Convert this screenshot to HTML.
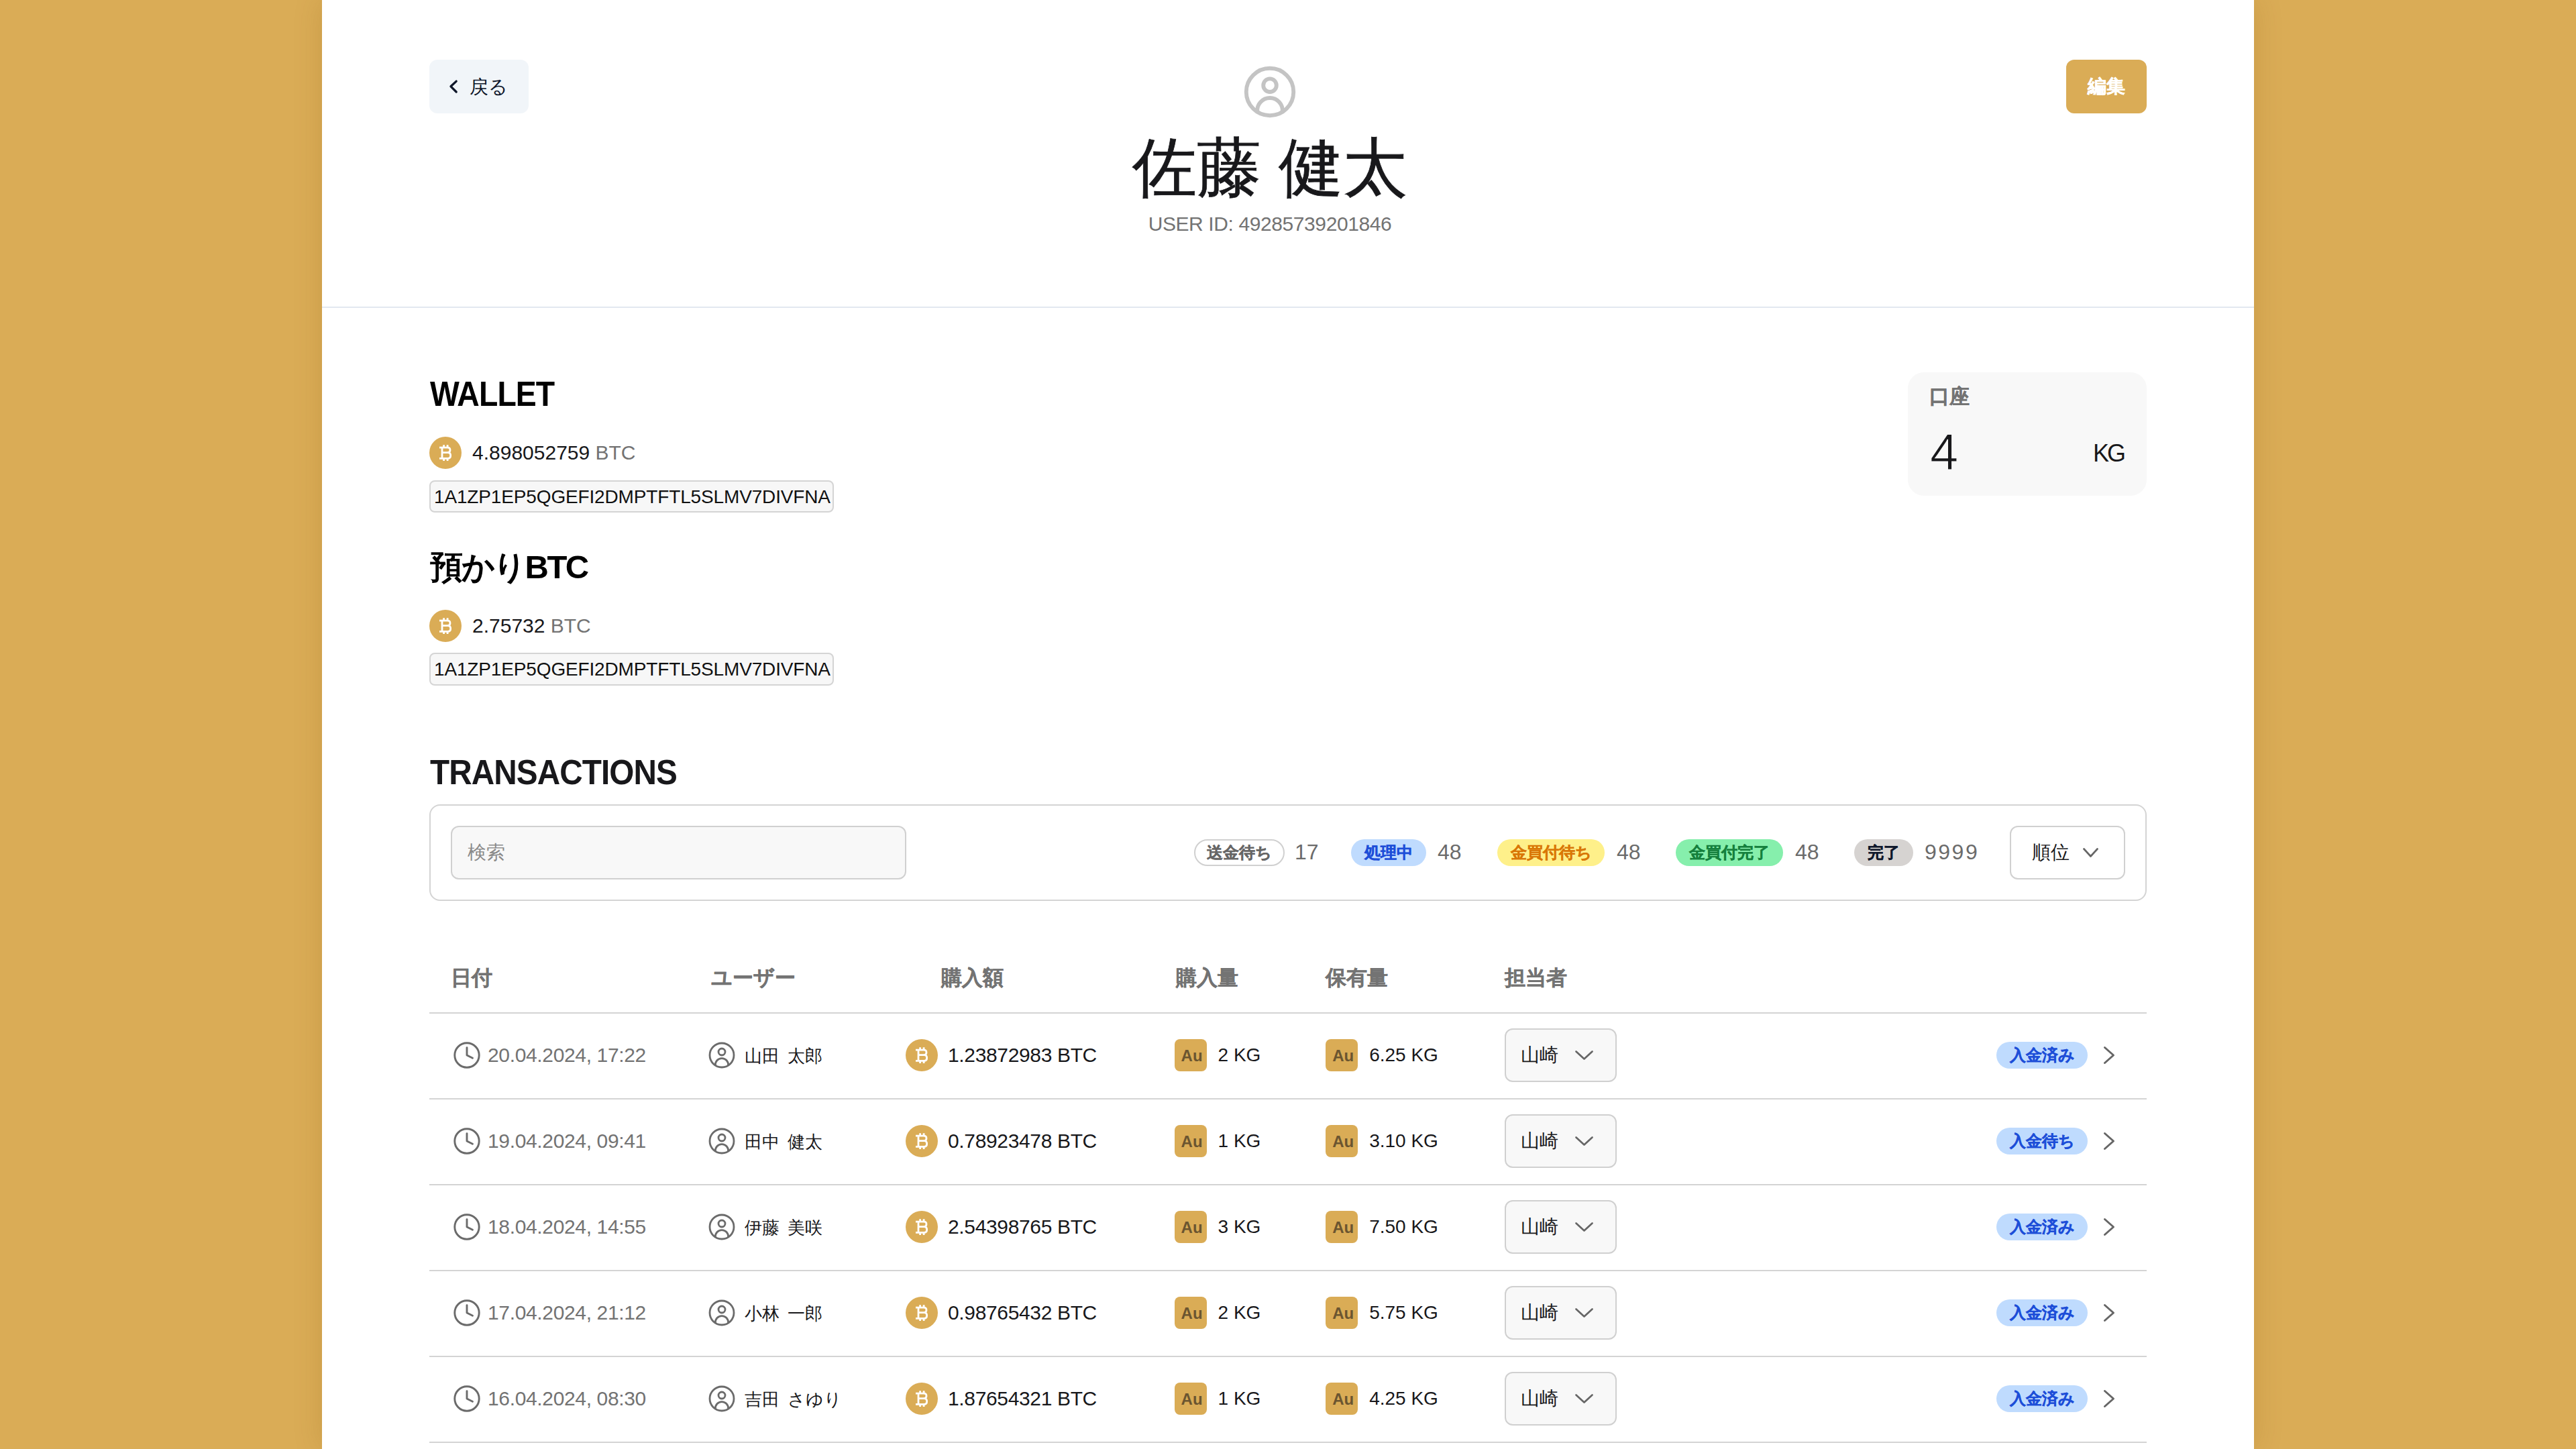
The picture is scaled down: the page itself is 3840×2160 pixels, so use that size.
<!DOCTYPE html>
<html lang="ja"><head><meta charset="utf-8"><title>User</title>
<style>
html,body{margin:0;padding:0}
body{width:3840px;height:2160px;overflow:hidden;background:#daac56;position:relative;font-family:"Liberation Sans",sans-serif}
.panel{position:absolute;left:480px;top:0;width:2880px;height:2160px;background:#fff;box-shadow:0 0 40px rgba(120,80,0,0.18)}
.abs{position:absolute}
.t{white-space:nowrap}
.b{-webkit-text-stroke:0.35px currentColor}
.lower{position:absolute;left:480px;top:459px;width:2880px;height:1701px;background:#ffffff}
</style></head><body>
<div class="panel"></div>
<div class="lower"></div>
<div class="abs" style="left:640px;top:89px;width:148px;height:80px;background:#f1f5f9;border-radius:12px"></div>
<svg class="abs" style="left:668px;top:118px" width="16" height="22" viewBox="0 0 16 22" fill="none" stroke="#0f172a" stroke-width="3.3" stroke-linecap="round" stroke-linejoin="round"><path d="M12.2 3.1L4 10.8L12.2 19"/></svg>
<div class="abs t " style="left:700px;top:116px;font-size:28px;line-height:28px;color:#0f172a;font-weight:400;">戻る</div>
<div class="abs" style="left:3080px;top:89px;width:120px;height:80px;background:#daac56;border-radius:12px"></div>
<div class="abs t b" style="left:3112px;top:115px;font-size:28px;line-height:28px;color:#ffffff;font-weight:700;">編集</div>
<svg class="abs" style="left:1846px;top:90px" width="94" height="94" viewBox="0 0 24 24" fill="none" stroke="#c4c4c4" stroke-width="1.5"><circle cx="12" cy="12" r="9"/><circle cx="12" cy="9.5" r="2.5"/><path d="M7.23 19.63A4.8 4.8 0 1 1 16.77 19.63"/></svg>
<div class="abs t" style="left:1393px;top:202px;width:1000px;text-align:center;font-size:96px;line-height:96px;font-weight:500;-webkit-text-stroke:0.8px #18181b;color:#18181b">佐藤 健太</div>
<div class="abs t" style="left:1393px;top:319px;width:1000px;text-align:center;font-size:30px;line-height:30px;letter-spacing:-0.4px;color:#737373">USER ID: 49285739201846</div>
<div class="abs" style="left:480px;top:457px;width:2880px;height:2px;background:#e2e8f0"></div>
<div class="abs t " style="left:641px;top:562px;font-size:51px;line-height:51px;color:#000;font-weight:700;letter-spacing:-1px;transform:scaleX(0.91);transform-origin:0 0">WALLET</div>
<svg class="abs" style="left:640px;top:651px" width="48" height="48" viewBox="0 0 48 48"><circle cx="24" cy="24" r="24" fill="#daac56"/><g fill="none" stroke="#fff" stroke-width="2.8" stroke-linecap="butt"><path d="M15 16.2H27C30 16.2 31 18 31 19.9S30 23.6 27 23.6H19.2M19 15V33.5M15 32.3H27.5C30.5 32.3 31.7 30.2 31.7 27.9S30.5 23.6 27.5 23.6"/><path d="M21.6 12.2V16.2M27.1 12.2V16.2M21.6 32.2V36M27.1 32.2V36"/></g></svg>
<div class="abs t " style="left:704px;top:660px;font-size:30px;line-height:30px;color:#18181b;font-weight:400;">4.898052759 <span style="color:#737373">BTC</span></div>
<div class="abs" style="left:640px;top:716px;width:603px;height:48px;box-sizing:border-box;background:#f7f7f7;border:2px solid #d4d4d4;border-radius:8px"></div>
<div class="abs t " style="left:647px;top:727px;font-size:28px;line-height:28px;color:#111;font-weight:400;letter-spacing:-0.15px">1A1ZP1EP5QGEFI2DMPTFTL5SLMV7DIVFNA</div>
<div class="abs t " style="left:641px;top:821px;font-size:49px;line-height:49px;color:#000;font-weight:700;letter-spacing:-2.5px">預かりBTC</div>
<svg class="abs" style="left:640px;top:909px" width="48" height="48" viewBox="0 0 48 48"><circle cx="24" cy="24" r="24" fill="#daac56"/><g fill="none" stroke="#fff" stroke-width="2.8" stroke-linecap="butt"><path d="M15 16.2H27C30 16.2 31 18 31 19.9S30 23.6 27 23.6H19.2M19 15V33.5M15 32.3H27.5C30.5 32.3 31.7 30.2 31.7 27.9S30.5 23.6 27.5 23.6"/><path d="M21.6 12.2V16.2M27.1 12.2V16.2M21.6 32.2V36M27.1 32.2V36"/></g></svg>
<div class="abs t " style="left:704px;top:918px;font-size:30px;line-height:30px;color:#18181b;font-weight:400;">2.75732 <span style="color:#737373">BTC</span></div>
<div class="abs" style="left:640px;top:973px;width:603px;height:49px;box-sizing:border-box;background:#f7f7f7;border:2px solid #d4d4d4;border-radius:8px"></div>
<div class="abs t " style="left:647px;top:984px;font-size:28px;line-height:28px;color:#111;font-weight:400;letter-spacing:-0.15px">1A1ZP1EP5QGEFI2DMPTFTL5SLMV7DIVFNA</div>
<div class="abs" style="left:2844px;top:555px;width:356px;height:184px;background:#f8f8f8;border-radius:24px"></div>
<div class="abs t b" style="left:2876px;top:576px;font-size:30px;line-height:30px;color:#737373;font-weight:700;">口座</div>
<div class="abs t " style="left:2877px;top:636px;font-size:76px;line-height:76px;color:#18181b;font-weight:300;-webkit-text-stroke:1.2px #f8f8f8">4</div>
<div class="abs t " style="left:3120px;top:658px;font-size:36px;line-height:36px;color:#18181b;font-weight:400;letter-spacing:-3px">KG</div>
<div class="abs t " style="left:641px;top:1126px;font-size:51px;line-height:51px;color:#18181b;font-weight:700;letter-spacing:-1px;transform:scaleX(0.936);transform-origin:0 0">TRANSACTIONS</div>
<div class="abs" style="left:640px;top:1199px;width:2560px;height:144px;box-sizing:border-box;border:2px solid #d4d4d4;border-radius:16px"></div>
<div class="abs" style="left:672px;top:1231px;width:679px;height:80px;box-sizing:border-box;background:#f8f8f8;border:2px solid #d0d0d0;border-radius:12px"></div>
<div class="abs t " style="left:697px;top:1257px;font-size:28px;line-height:28px;color:#8a8a8a;font-weight:400;">検索</div>
<div class="abs t b" style="left:1780px;top:1251px;width:135px;height:40px;box-sizing:border-box;border:2px solid #d0d0d0;background:#fff;border-radius:20px;color:#666;font-weight:700;font-size:24px;line-height:36px;text-align:center">送金待ち</div>
<div class="abs t " style="left:1930px;top:1254px;font-size:32px;line-height:32px;color:#6b6b6b;font-weight:400;">17</div>
<div class="abs t b" style="left:2014px;top:1251px;width:112px;height:40px;box-sizing:border-box;background:#bfdbfe;border-radius:20px;color:#1d4ed8;font-weight:700;font-size:24px;line-height:40px;text-align:center">処理中</div>
<div class="abs t " style="left:2143px;top:1254px;font-size:32px;line-height:32px;color:#6b6b6b;font-weight:400;">48</div>
<div class="abs t b" style="left:2232px;top:1251px;width:160px;height:40px;box-sizing:border-box;background:#fef08a;border-radius:20px;color:#d97706;font-weight:700;font-size:24px;line-height:40px;text-align:center">金買付待ち</div>
<div class="abs t " style="left:2410px;top:1254px;font-size:32px;line-height:32px;color:#6b6b6b;font-weight:400;">48</div>
<div class="abs t b" style="left:2498px;top:1251px;width:160px;height:40px;box-sizing:border-box;background:#86efac;border-radius:20px;color:#15803d;font-weight:700;font-size:24px;line-height:40px;text-align:center">金買付完了</div>
<div class="abs t " style="left:2676px;top:1254px;font-size:32px;line-height:32px;color:#6b6b6b;font-weight:400;">48</div>
<div class="abs t b" style="left:2764px;top:1251px;width:88px;height:40px;box-sizing:border-box;background:#d6d3d1;border-radius:20px;color:#0f172a;font-weight:700;font-size:24px;line-height:40px;text-align:center">完了</div>
<div class="abs t " style="left:2869px;top:1254px;font-size:32px;line-height:32px;color:#6b6b6b;font-weight:400;letter-spacing:2.5px">9999</div>
<div class="abs" style="left:2996px;top:1231px;width:172px;height:80px;box-sizing:border-box;background:#fff;border:2px solid #d0d0d0;border-radius:12px"></div>
<div class="abs t " style="left:3029px;top:1257px;font-size:28px;line-height:28px;color:#18181b;font-weight:400;">順位</div>
<svg class="abs" style="left:3105px;top:1264px;overflow:visible" width="23" height="14" viewBox="0 0 23 14" fill="none" stroke="#666" stroke-width="2.7" stroke-linecap="round" stroke-linejoin="round"><path d="M1.5 1.5L11.5 12.5L21.5 1.5"/></svg>
<div class="abs t b" style="left:672px;top:1442px;font-size:31px;line-height:31px;color:#737373;font-weight:700;">日付</div>
<div class="abs t b" style="left:1060px;top:1442px;font-size:31px;line-height:31px;color:#737373;font-weight:700;">ユーザー</div>
<div class="abs t b" style="left:1403px;top:1442px;font-size:31px;line-height:31px;color:#737373;font-weight:700;">購入額</div>
<div class="abs t b" style="left:1753px;top:1442px;font-size:31px;line-height:31px;color:#737373;font-weight:700;">購入量</div>
<div class="abs t b" style="left:1976px;top:1442px;font-size:31px;line-height:31px;color:#737373;font-weight:700;">保有量</div>
<div class="abs t b" style="left:2243px;top:1442px;font-size:31px;line-height:31px;color:#737373;font-weight:700;">担当者</div>
<div class="abs" style="left:640px;top:1509px;width:2560px;height:2px;background:#d4d4d4"></div>
<svg class="abs" style="left:676px;top:1553px" width="40" height="40" viewBox="0 0 40 40" fill="none" stroke="#6b6b6b" stroke-width="2.9" stroke-linecap="round" stroke-linejoin="round"><circle cx="20" cy="20" r="18.2"/><path d="M20 8.6V20L28.5 24.2"/></svg>
<div class="abs t " style="left:727px;top:1558px;font-size:30px;line-height:30px;color:#737373;font-weight:400;letter-spacing:-0.35px">20.04.2024, 17:22</div>
<svg class="abs" style="left:1052px;top:1549px" width="48" height="48" viewBox="0 0 24 24" fill="none" stroke="#6b6b6b" stroke-width="1.4"><circle cx="12" cy="12" r="9"/><circle cx="12" cy="9.5" r="2.5"/><path d="M7.23 19.63A4.8 4.8 0 1 1 16.77 19.63"/></svg>
<div class="abs t " style="left:1110px;top:1561px;font-size:26px;line-height:26px;color:#18181b;font-weight:400;word-spacing:5px">山田 太郎</div>
<svg class="abs" style="left:1350px;top:1549px" width="48" height="48" viewBox="0 0 48 48"><circle cx="24" cy="24" r="24" fill="#daac56"/><g fill="none" stroke="#fff" stroke-width="2.8" stroke-linecap="butt"><path d="M15 16.2H27C30 16.2 31 18 31 19.9S30 23.6 27 23.6H19.2M19 15V33.5M15 32.3H27.5C30.5 32.3 31.7 30.2 31.7 27.9S30.5 23.6 27.5 23.6"/><path d="M21.6 12.2V16.2M27.1 12.2V16.2M21.6 32.2V36M27.1 32.2V36"/></g></svg>
<div class="abs t " style="left:1413px;top:1558px;font-size:30px;line-height:30px;color:#18181b;font-weight:400;letter-spacing:-0.35px">1.23872983 BTC</div>
<div class="abs" style="left:1615px;top:1549px;width:400px;height:48px;display:flex;justify-content:center;align-items:center"><div style="width:48px;height:48px;border-radius:8px;background:#daac56;color:#6b5530;font-weight:700;font-size:24px;line-height:50px;text-align:center;box-sizing:border-box;padding-left:4px" class="t">Au</div><div class="t" style="margin-left:17px;font-size:28px;line-height:48px;color:#18181b">2 KG</div></div>
<div class="abs" style="left:1860px;top:1549px;width:400px;height:48px;display:flex;justify-content:center;align-items:center"><div style="width:48px;height:48px;border-radius:8px;background:#daac56;color:#6b5530;font-weight:700;font-size:24px;line-height:50px;text-align:center;box-sizing:border-box;padding-left:4px" class="t">Au</div><div class="t" style="margin-left:17px;font-size:28px;line-height:48px;color:#18181b">6.25 KG</div></div>
<div class="abs" style="left:2243px;top:1533px;width:167px;height:80px;box-sizing:border-box;background:#f8f8f8;border:2px solid #d0d0d0;border-radius:12px"></div>
<div class="abs t " style="left:2267px;top:1559px;font-size:28px;line-height:28px;color:#18181b;font-weight:400;">山崎</div>
<svg class="abs" style="left:2348px;top:1566px;overflow:visible" width="27" height="14" viewBox="0 0 27 14" fill="none" stroke="#666" stroke-width="2.7" stroke-linecap="round" stroke-linejoin="round"><path d="M1.5 1.5L13.5 12.5L25.5 1.5"/></svg>
<div class="abs t b" style="left:2976px;top:1553px;width:136px;height:40px;background:#bfdbfe;border-radius:20px;color:#1d4ed8;font-weight:700;font-size:24px;line-height:40px;text-align:center">入金済み</div>
<svg class="abs" style="left:3136px;top:1560px;overflow:visible" width="16" height="26" viewBox="0 0 16 26" fill="none" stroke="#666" stroke-width="3" stroke-linecap="round" stroke-linejoin="round"><path d="M1.5 1.5L14.5 13.0L1.5 24.5"/></svg>
<div class="abs" style="left:640px;top:1637px;width:2560px;height:2px;background:#d4d4d4"></div>
<svg class="abs" style="left:676px;top:1681px" width="40" height="40" viewBox="0 0 40 40" fill="none" stroke="#6b6b6b" stroke-width="2.9" stroke-linecap="round" stroke-linejoin="round"><circle cx="20" cy="20" r="18.2"/><path d="M20 8.6V20L28.5 24.2"/></svg>
<div class="abs t " style="left:727px;top:1686px;font-size:30px;line-height:30px;color:#737373;font-weight:400;letter-spacing:-0.35px">19.04.2024, 09:41</div>
<svg class="abs" style="left:1052px;top:1677px" width="48" height="48" viewBox="0 0 24 24" fill="none" stroke="#6b6b6b" stroke-width="1.4"><circle cx="12" cy="12" r="9"/><circle cx="12" cy="9.5" r="2.5"/><path d="M7.23 19.63A4.8 4.8 0 1 1 16.77 19.63"/></svg>
<div class="abs t " style="left:1110px;top:1689px;font-size:26px;line-height:26px;color:#18181b;font-weight:400;word-spacing:5px">田中 健太</div>
<svg class="abs" style="left:1350px;top:1677px" width="48" height="48" viewBox="0 0 48 48"><circle cx="24" cy="24" r="24" fill="#daac56"/><g fill="none" stroke="#fff" stroke-width="2.8" stroke-linecap="butt"><path d="M15 16.2H27C30 16.2 31 18 31 19.9S30 23.6 27 23.6H19.2M19 15V33.5M15 32.3H27.5C30.5 32.3 31.7 30.2 31.7 27.9S30.5 23.6 27.5 23.6"/><path d="M21.6 12.2V16.2M27.1 12.2V16.2M21.6 32.2V36M27.1 32.2V36"/></g></svg>
<div class="abs t " style="left:1413px;top:1686px;font-size:30px;line-height:30px;color:#18181b;font-weight:400;letter-spacing:-0.35px">0.78923478 BTC</div>
<div class="abs" style="left:1615px;top:1677px;width:400px;height:48px;display:flex;justify-content:center;align-items:center"><div style="width:48px;height:48px;border-radius:8px;background:#daac56;color:#6b5530;font-weight:700;font-size:24px;line-height:50px;text-align:center;box-sizing:border-box;padding-left:4px" class="t">Au</div><div class="t" style="margin-left:17px;font-size:28px;line-height:48px;color:#18181b">1 KG</div></div>
<div class="abs" style="left:1860px;top:1677px;width:400px;height:48px;display:flex;justify-content:center;align-items:center"><div style="width:48px;height:48px;border-radius:8px;background:#daac56;color:#6b5530;font-weight:700;font-size:24px;line-height:50px;text-align:center;box-sizing:border-box;padding-left:4px" class="t">Au</div><div class="t" style="margin-left:17px;font-size:28px;line-height:48px;color:#18181b">3.10 KG</div></div>
<div class="abs" style="left:2243px;top:1661px;width:167px;height:80px;box-sizing:border-box;background:#f8f8f8;border:2px solid #d0d0d0;border-radius:12px"></div>
<div class="abs t " style="left:2267px;top:1687px;font-size:28px;line-height:28px;color:#18181b;font-weight:400;">山崎</div>
<svg class="abs" style="left:2348px;top:1694px;overflow:visible" width="27" height="14" viewBox="0 0 27 14" fill="none" stroke="#666" stroke-width="2.7" stroke-linecap="round" stroke-linejoin="round"><path d="M1.5 1.5L13.5 12.5L25.5 1.5"/></svg>
<div class="abs t b" style="left:2976px;top:1681px;width:136px;height:40px;background:#bfdbfe;border-radius:20px;color:#1d4ed8;font-weight:700;font-size:24px;line-height:40px;text-align:center">入金待ち</div>
<svg class="abs" style="left:3136px;top:1688px;overflow:visible" width="16" height="26" viewBox="0 0 16 26" fill="none" stroke="#666" stroke-width="3" stroke-linecap="round" stroke-linejoin="round"><path d="M1.5 1.5L14.5 13.0L1.5 24.5"/></svg>
<div class="abs" style="left:640px;top:1765px;width:2560px;height:2px;background:#d4d4d4"></div>
<svg class="abs" style="left:676px;top:1809px" width="40" height="40" viewBox="0 0 40 40" fill="none" stroke="#6b6b6b" stroke-width="2.9" stroke-linecap="round" stroke-linejoin="round"><circle cx="20" cy="20" r="18.2"/><path d="M20 8.6V20L28.5 24.2"/></svg>
<div class="abs t " style="left:727px;top:1814px;font-size:30px;line-height:30px;color:#737373;font-weight:400;letter-spacing:-0.35px">18.04.2024, 14:55</div>
<svg class="abs" style="left:1052px;top:1805px" width="48" height="48" viewBox="0 0 24 24" fill="none" stroke="#6b6b6b" stroke-width="1.4"><circle cx="12" cy="12" r="9"/><circle cx="12" cy="9.5" r="2.5"/><path d="M7.23 19.63A4.8 4.8 0 1 1 16.77 19.63"/></svg>
<div class="abs t " style="left:1110px;top:1817px;font-size:26px;line-height:26px;color:#18181b;font-weight:400;word-spacing:5px">伊藤 美咲</div>
<svg class="abs" style="left:1350px;top:1805px" width="48" height="48" viewBox="0 0 48 48"><circle cx="24" cy="24" r="24" fill="#daac56"/><g fill="none" stroke="#fff" stroke-width="2.8" stroke-linecap="butt"><path d="M15 16.2H27C30 16.2 31 18 31 19.9S30 23.6 27 23.6H19.2M19 15V33.5M15 32.3H27.5C30.5 32.3 31.7 30.2 31.7 27.9S30.5 23.6 27.5 23.6"/><path d="M21.6 12.2V16.2M27.1 12.2V16.2M21.6 32.2V36M27.1 32.2V36"/></g></svg>
<div class="abs t " style="left:1413px;top:1814px;font-size:30px;line-height:30px;color:#18181b;font-weight:400;letter-spacing:-0.35px">2.54398765 BTC</div>
<div class="abs" style="left:1615px;top:1805px;width:400px;height:48px;display:flex;justify-content:center;align-items:center"><div style="width:48px;height:48px;border-radius:8px;background:#daac56;color:#6b5530;font-weight:700;font-size:24px;line-height:50px;text-align:center;box-sizing:border-box;padding-left:4px" class="t">Au</div><div class="t" style="margin-left:17px;font-size:28px;line-height:48px;color:#18181b">3 KG</div></div>
<div class="abs" style="left:1860px;top:1805px;width:400px;height:48px;display:flex;justify-content:center;align-items:center"><div style="width:48px;height:48px;border-radius:8px;background:#daac56;color:#6b5530;font-weight:700;font-size:24px;line-height:50px;text-align:center;box-sizing:border-box;padding-left:4px" class="t">Au</div><div class="t" style="margin-left:17px;font-size:28px;line-height:48px;color:#18181b">7.50 KG</div></div>
<div class="abs" style="left:2243px;top:1789px;width:167px;height:80px;box-sizing:border-box;background:#f8f8f8;border:2px solid #d0d0d0;border-radius:12px"></div>
<div class="abs t " style="left:2267px;top:1815px;font-size:28px;line-height:28px;color:#18181b;font-weight:400;">山崎</div>
<svg class="abs" style="left:2348px;top:1822px;overflow:visible" width="27" height="14" viewBox="0 0 27 14" fill="none" stroke="#666" stroke-width="2.7" stroke-linecap="round" stroke-linejoin="round"><path d="M1.5 1.5L13.5 12.5L25.5 1.5"/></svg>
<div class="abs t b" style="left:2976px;top:1809px;width:136px;height:40px;background:#bfdbfe;border-radius:20px;color:#1d4ed8;font-weight:700;font-size:24px;line-height:40px;text-align:center">入金済み</div>
<svg class="abs" style="left:3136px;top:1816px;overflow:visible" width="16" height="26" viewBox="0 0 16 26" fill="none" stroke="#666" stroke-width="3" stroke-linecap="round" stroke-linejoin="round"><path d="M1.5 1.5L14.5 13.0L1.5 24.5"/></svg>
<div class="abs" style="left:640px;top:1893px;width:2560px;height:2px;background:#d4d4d4"></div>
<svg class="abs" style="left:676px;top:1937px" width="40" height="40" viewBox="0 0 40 40" fill="none" stroke="#6b6b6b" stroke-width="2.9" stroke-linecap="round" stroke-linejoin="round"><circle cx="20" cy="20" r="18.2"/><path d="M20 8.6V20L28.5 24.2"/></svg>
<div class="abs t " style="left:727px;top:1942px;font-size:30px;line-height:30px;color:#737373;font-weight:400;letter-spacing:-0.35px">17.04.2024, 21:12</div>
<svg class="abs" style="left:1052px;top:1933px" width="48" height="48" viewBox="0 0 24 24" fill="none" stroke="#6b6b6b" stroke-width="1.4"><circle cx="12" cy="12" r="9"/><circle cx="12" cy="9.5" r="2.5"/><path d="M7.23 19.63A4.8 4.8 0 1 1 16.77 19.63"/></svg>
<div class="abs t " style="left:1110px;top:1945px;font-size:26px;line-height:26px;color:#18181b;font-weight:400;word-spacing:5px">小林 一郎</div>
<svg class="abs" style="left:1350px;top:1933px" width="48" height="48" viewBox="0 0 48 48"><circle cx="24" cy="24" r="24" fill="#daac56"/><g fill="none" stroke="#fff" stroke-width="2.8" stroke-linecap="butt"><path d="M15 16.2H27C30 16.2 31 18 31 19.9S30 23.6 27 23.6H19.2M19 15V33.5M15 32.3H27.5C30.5 32.3 31.7 30.2 31.7 27.9S30.5 23.6 27.5 23.6"/><path d="M21.6 12.2V16.2M27.1 12.2V16.2M21.6 32.2V36M27.1 32.2V36"/></g></svg>
<div class="abs t " style="left:1413px;top:1942px;font-size:30px;line-height:30px;color:#18181b;font-weight:400;letter-spacing:-0.35px">0.98765432 BTC</div>
<div class="abs" style="left:1615px;top:1933px;width:400px;height:48px;display:flex;justify-content:center;align-items:center"><div style="width:48px;height:48px;border-radius:8px;background:#daac56;color:#6b5530;font-weight:700;font-size:24px;line-height:50px;text-align:center;box-sizing:border-box;padding-left:4px" class="t">Au</div><div class="t" style="margin-left:17px;font-size:28px;line-height:48px;color:#18181b">2 KG</div></div>
<div class="abs" style="left:1860px;top:1933px;width:400px;height:48px;display:flex;justify-content:center;align-items:center"><div style="width:48px;height:48px;border-radius:8px;background:#daac56;color:#6b5530;font-weight:700;font-size:24px;line-height:50px;text-align:center;box-sizing:border-box;padding-left:4px" class="t">Au</div><div class="t" style="margin-left:17px;font-size:28px;line-height:48px;color:#18181b">5.75 KG</div></div>
<div class="abs" style="left:2243px;top:1917px;width:167px;height:80px;box-sizing:border-box;background:#f8f8f8;border:2px solid #d0d0d0;border-radius:12px"></div>
<div class="abs t " style="left:2267px;top:1943px;font-size:28px;line-height:28px;color:#18181b;font-weight:400;">山崎</div>
<svg class="abs" style="left:2348px;top:1950px;overflow:visible" width="27" height="14" viewBox="0 0 27 14" fill="none" stroke="#666" stroke-width="2.7" stroke-linecap="round" stroke-linejoin="round"><path d="M1.5 1.5L13.5 12.5L25.5 1.5"/></svg>
<div class="abs t b" style="left:2976px;top:1937px;width:136px;height:40px;background:#bfdbfe;border-radius:20px;color:#1d4ed8;font-weight:700;font-size:24px;line-height:40px;text-align:center">入金済み</div>
<svg class="abs" style="left:3136px;top:1944px;overflow:visible" width="16" height="26" viewBox="0 0 16 26" fill="none" stroke="#666" stroke-width="3" stroke-linecap="round" stroke-linejoin="round"><path d="M1.5 1.5L14.5 13.0L1.5 24.5"/></svg>
<div class="abs" style="left:640px;top:2021px;width:2560px;height:2px;background:#d4d4d4"></div>
<svg class="abs" style="left:676px;top:2065px" width="40" height="40" viewBox="0 0 40 40" fill="none" stroke="#6b6b6b" stroke-width="2.9" stroke-linecap="round" stroke-linejoin="round"><circle cx="20" cy="20" r="18.2"/><path d="M20 8.6V20L28.5 24.2"/></svg>
<div class="abs t " style="left:727px;top:2070px;font-size:30px;line-height:30px;color:#737373;font-weight:400;letter-spacing:-0.35px">16.04.2024, 08:30</div>
<svg class="abs" style="left:1052px;top:2061px" width="48" height="48" viewBox="0 0 24 24" fill="none" stroke="#6b6b6b" stroke-width="1.4"><circle cx="12" cy="12" r="9"/><circle cx="12" cy="9.5" r="2.5"/><path d="M7.23 19.63A4.8 4.8 0 1 1 16.77 19.63"/></svg>
<div class="abs t " style="left:1110px;top:2073px;font-size:26px;line-height:26px;color:#18181b;font-weight:400;word-spacing:5px">吉田 さゆり</div>
<svg class="abs" style="left:1350px;top:2061px" width="48" height="48" viewBox="0 0 48 48"><circle cx="24" cy="24" r="24" fill="#daac56"/><g fill="none" stroke="#fff" stroke-width="2.8" stroke-linecap="butt"><path d="M15 16.2H27C30 16.2 31 18 31 19.9S30 23.6 27 23.6H19.2M19 15V33.5M15 32.3H27.5C30.5 32.3 31.7 30.2 31.7 27.9S30.5 23.6 27.5 23.6"/><path d="M21.6 12.2V16.2M27.1 12.2V16.2M21.6 32.2V36M27.1 32.2V36"/></g></svg>
<div class="abs t " style="left:1413px;top:2070px;font-size:30px;line-height:30px;color:#18181b;font-weight:400;letter-spacing:-0.35px">1.87654321 BTC</div>
<div class="abs" style="left:1615px;top:2061px;width:400px;height:48px;display:flex;justify-content:center;align-items:center"><div style="width:48px;height:48px;border-radius:8px;background:#daac56;color:#6b5530;font-weight:700;font-size:24px;line-height:50px;text-align:center;box-sizing:border-box;padding-left:4px" class="t">Au</div><div class="t" style="margin-left:17px;font-size:28px;line-height:48px;color:#18181b">1 KG</div></div>
<div class="abs" style="left:1860px;top:2061px;width:400px;height:48px;display:flex;justify-content:center;align-items:center"><div style="width:48px;height:48px;border-radius:8px;background:#daac56;color:#6b5530;font-weight:700;font-size:24px;line-height:50px;text-align:center;box-sizing:border-box;padding-left:4px" class="t">Au</div><div class="t" style="margin-left:17px;font-size:28px;line-height:48px;color:#18181b">4.25 KG</div></div>
<div class="abs" style="left:2243px;top:2045px;width:167px;height:80px;box-sizing:border-box;background:#f8f8f8;border:2px solid #d0d0d0;border-radius:12px"></div>
<div class="abs t " style="left:2267px;top:2071px;font-size:28px;line-height:28px;color:#18181b;font-weight:400;">山崎</div>
<svg class="abs" style="left:2348px;top:2078px;overflow:visible" width="27" height="14" viewBox="0 0 27 14" fill="none" stroke="#666" stroke-width="2.7" stroke-linecap="round" stroke-linejoin="round"><path d="M1.5 1.5L13.5 12.5L25.5 1.5"/></svg>
<div class="abs t b" style="left:2976px;top:2065px;width:136px;height:40px;background:#bfdbfe;border-radius:20px;color:#1d4ed8;font-weight:700;font-size:24px;line-height:40px;text-align:center">入金済み</div>
<svg class="abs" style="left:3136px;top:2072px;overflow:visible" width="16" height="26" viewBox="0 0 16 26" fill="none" stroke="#666" stroke-width="3" stroke-linecap="round" stroke-linejoin="round"><path d="M1.5 1.5L14.5 13.0L1.5 24.5"/></svg>
<div class="abs" style="left:640px;top:2149px;width:2560px;height:2px;background:#d4d4d4"></div>
</body></html>
